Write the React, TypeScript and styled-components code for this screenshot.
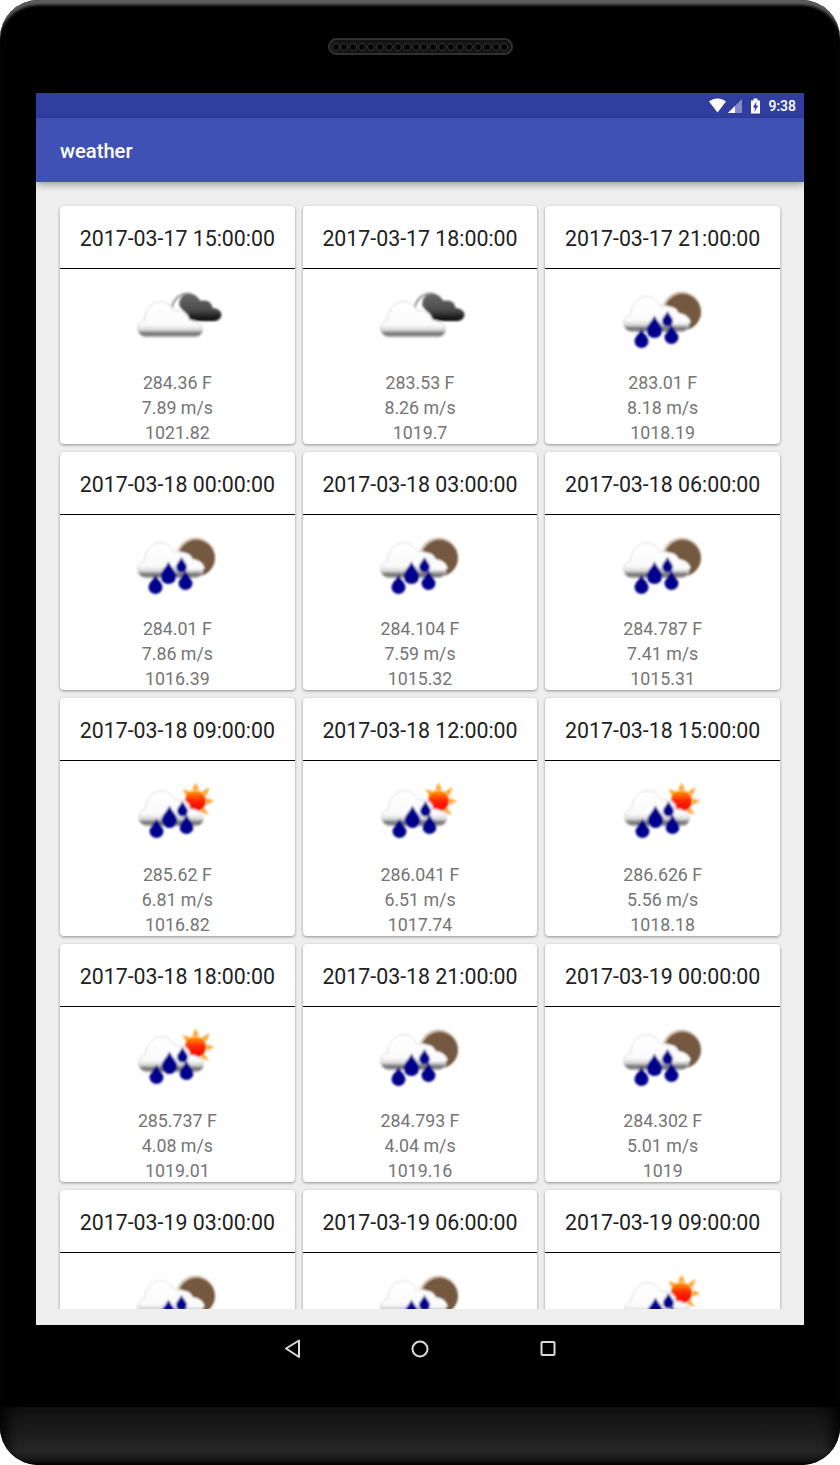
import { useId } from "react";
import styled, { createGlobalStyle } from "styled-components";

type Sky = "overcast" | "moon" | "sun";

interface Forecast {
  time: string;
  sky: Sky;
  lines: string[];
}

const forecasts: Forecast[] = [
  { time: "2017-03-17 15:00:00", sky: "overcast", lines: ["284.36 F", "7.89 m/s", "1021.82"] },
  { time: "2017-03-17 18:00:00", sky: "overcast", lines: ["283.53 F", "8.26 m/s", "1019.7"] },
  { time: "2017-03-17 21:00:00", sky: "moon", lines: ["283.01 F", "8.18 m/s", "1018.19"] },
  { time: "2017-03-18 00:00:00", sky: "moon", lines: ["284.01 F", "7.86 m/s", "1016.39"] },
  { time: "2017-03-18 03:00:00", sky: "moon", lines: ["284.104 F", "7.59 m/s", "1015.32"] },
  { time: "2017-03-18 06:00:00", sky: "moon", lines: ["284.787 F", "7.41 m/s", "1015.31"] },
  { time: "2017-03-18 09:00:00", sky: "sun", lines: ["285.62 F", "6.81 m/s", "1016.82"] },
  { time: "2017-03-18 12:00:00", sky: "sun", lines: ["286.041 F", "6.51 m/s", "1017.74"] },
  { time: "2017-03-18 15:00:00", sky: "sun", lines: ["286.626 F", "5.56 m/s", "1018.18"] },
  { time: "2017-03-18 18:00:00", sky: "sun", lines: ["285.737 F", "4.08 m/s", "1019.01"] },
  { time: "2017-03-18 21:00:00", sky: "moon", lines: ["284.793 F", "4.04 m/s", "1019.16"] },
  { time: "2017-03-19 00:00:00", sky: "moon", lines: ["284.302 F", "5.01 m/s", "1019"] },
  { time: "2017-03-19 03:00:00", sky: "moon", lines: [] },
  { time: "2017-03-19 06:00:00", sky: "moon", lines: [] },
  { time: "2017-03-19 09:00:00", sky: "sun", lines: [] },
];

const GlobalStyle = createGlobalStyle`
  html, body {
    margin: 0;
    padding: 0;
    background: #fff;
  }
  body {
    font-family: Roboto, "Liberation Sans", sans-serif;
  }
`;

const Phone = styled.div`
  width: 840px;
  height: 1465px;
  border-radius: 38px;
  overflow: hidden;
  display: flex;
  flex-direction: column;
  background: #000;
  box-shadow: inset 0 7px 3px -2px #5c5c5c;
`;

const TopBezel = styled.div`
  height: 93px;
  display: flex;
  justify-content: center;
  padding-top: 38px;
  box-sizing: border-box;
`;

const Speaker = styled.div`
  width: 185px;
  height: 17px;
  box-sizing: border-box;
  border: 2px solid #303030;
  border-radius: 9px;
  background: #141414;
  display: flex;
  align-items: center;
  justify-content: space-between;
  padding: 0 2px;
`;

const SpeakerHole = styled.span`
  width: 8px;
  height: 8px;
  box-sizing: border-box;
  border-radius: 50%;
  border: 1px solid #383838;
  background: #000;
`;

const Screen = styled.div`
  height: 1232px;
  margin: 0 36px;
  display: flex;
  flex-direction: column;
  background: #eeeeee;
`;

const StatusBar = styled.div`
  height: 25px;
  flex: none;
  background: #303f9f;
  display: flex;
  align-items: center;
  justify-content: flex-end;
  padding-right: 8px;
  color: #fff;
  font-size: 14px;
  font-weight: 500;
`;

const StatusIcons = styled.svg`
  margin-right: 6px;
`;

const AppBar = styled.div`
  height: 64px;
  flex: none;
  box-sizing: border-box;
  padding: 2px 0 0 24px;
  background: #3f51b5;
  display: flex;
  align-items: center;
  color: #fff;
  font-size: 20.2px;
  font-weight: 500;
  box-shadow: 0 3px 7px rgba(0, 0, 0, 0.32);
  z-index: 1;
`;

const Scroller = styled.div`
  flex: 1;
  min-height: 0;
  margin-bottom: 16px;
  overflow: hidden;
`;

const Grid = styled.div`
  display: grid;
  grid-template-columns: repeat(3, 1fr);
  gap: 8px;
  padding: 24px 24px 0;
`;

const Card = styled.div`
  height: 238px;
  background: #fff;
  border-radius: 4px;
  overflow: hidden;
  display: flex;
  flex-direction: column;
  align-items: stretch;
  box-shadow: 0 1px 3px rgba(0, 0, 0, 0.4);
`;

const CardTitle = styled.div`
  height: 60px;
  padding-top: 2px;
  flex: none;
  border-bottom: 1px solid #000;
  display: flex;
  align-items: center;
  justify-content: center;
  font-size: 21.33px;
  color: #212121;
`;

const IconSlot = styled.div`
  height: 101px;
  flex: none;
  display: flex;
  justify-content: center;
  padding-top: 11px;
  box-sizing: border-box;
`;

const Reading = styled.div`
  height: 25px;
  line-height: 25px;
  flex: none;
  text-align: center;
  font-size: 17.8px;
  color: #757575;
`;

const NavBar = styled.div`
  height: 82px;
  flex: none;
  display: flex;
  justify-content: center;
  align-items: flex-start;
  padding-top: 12px;
  box-sizing: border-box;
`;

const Chin = styled.div`
  flex: 1;
  background: linear-gradient(#101010 0%, #1c1c1c 45%, #272727 75%, #161616 92%, #000 100%);
  box-shadow:
    inset 18px 0 16px -12px #000,
    inset -18px 0 16px -12px #000;
`;

const cloudPath =
  "M27 57C17 57 14 43 25 40C25 25 43 12 55 31C64 29 70 35 69 40C78 40 84 46 83 51C82 55 79 57 75 57Z";

function Drops({ dx }: { dx: number }) {
  const drops: [number, number, number][] = [
    [44, 50, 8],
    [31, 61, 7],
    [61, 57, 7],
    [57, 41, 5.5],
  ];
  return (
    <g fill="#00008c">
      {drops.map(([x, y, r]) => (
        <path
          key={`${x}-${y}`}
          transform={`translate(${dx} 0)`}
          d={`M${x} ${y - r * 1.8}C${x + r * 0.4} ${y - r} ${x + r} ${y - r * 0.5} ${x + r} ${y}A${r} ${r} 0 1 1 ${x - r} ${y}C${x - r} ${y - r * 0.5} ${x - r * 0.4} ${y - r} ${x} ${y - r * 1.8}Z`}
        />
      ))}
    </g>
  );
}

function WeatherIcon({ sky }: { sky: Sky }) {
  const id = useId().replace(/[^a-zA-Z0-9]/g, "");
  const soft = `${id}soft`;
  const cloud = `${id}cloud`;
  const dark = `${id}dark`;
  const sunFill = `${id}sun`;
  // the icons do not sit the same way in their bitmaps, so the viewBox takes the offset
  const viewX = sky === "moon" ? -2.5 : 2.5;
  const viewY = sky === "sun" ? 2 : 0;

  return (
    <svg width={110} height={70} viewBox={`${viewX} ${viewY} 110 70`}>
      <defs>
        <filter id={soft} x="-10%" y="-10%" width="120%" height="120%">
          <feGaussianBlur stdDeviation={0.9} />
        </filter>
        <linearGradient id={cloud} x1="0" y1="0" x2="0" y2="1">
          <stop offset="0" stopColor="#ffffff" />
          <stop offset="0.66" stopColor="#fbfbfb" />
          <stop offset="0.8" stopColor="#d8d8d8" />
          <stop offset="0.9" stopColor="#707070" />
          <stop offset="1" stopColor="#9a9a9a" />
        </linearGradient>
        <linearGradient id={dark} x1="0" y1="0" x2="0" y2="1">
          <stop offset="0" stopColor="#6a6a6a" />
          <stop offset="0.62" stopColor="#4a4a4a" />
          <stop offset="1" stopColor="#000000" />
        </linearGradient>
        <linearGradient id={sunFill} x1="0" y1="0" x2="0" y2="1">
          <stop offset="0" stopColor="#ffa000" />
          <stop offset="0.45" stopColor="#ff2a00" />
          <stop offset="1" stopColor="#f00000" />
        </linearGradient>
      </defs>
      <g filter={`url(#${soft})`}>
        {sky === "overcast" && (
          <>
            <path
              d="M52 28C55 15 68 9 77 18"
              fill="none"
              stroke="#9a9a9a"
              strokeWidth={2.2}
            />
            <path
              d="M60 26C58 13 74 9 81 21C90 19 93 25 93 28C98 28 102 31 102 35C101 40 97 41 93 41L72 41Z"
              fill={`url(#${dark})`}
            />
            <path d={cloudPath} fill={`url(#${cloud})`} stroke="#cfcfcf" strokeWidth={0.9} />
          </>
        )}
        {sky === "moon" && (
          <>
            <circle cx={71} cy={31} r={19.5} fill="#d8c8b8" />
            <circle cx={72} cy={32} r={18.5} fill="#75593f" />
            <g transform="translate(-5 -5)">
              <path d={cloudPath} fill={`url(#${cloud})`} stroke="#d4d4d4" strokeWidth={0.9} />
            </g>
            <path d="M52 29C57 25 66 26 68 33C75 34 80 38 80 43L56 44Z" fill="#fbfbfb" />
            <Drops dx={0} />
          </>
        )}
        {sky === "sun" && (
          <>
            <g fill="#ffa52e">
              <path d="M72.5 20L76 12.5L79.5 20Z" />
              <path d="M63 19L72 22L67 27Z" />
              <path d="M82 22L90 17L87 26Z" />
              <path d="M87 28L94.5 31L87 35Z" />
              <path d="M84 37L89.5 45L81 42Z" />
            </g>
            <circle cx={76} cy={31} r={10.5} fill={`url(#${sunFill})`} />
            <g transform="translate(1 -1)">
              <path d={cloudPath} fill={`url(#${cloud})`} stroke="#d4d4d4" strokeWidth={0.9} />
            </g>
            <Drops dx={6} />
          </>
        )}
      </g>
    </svg>
  );
}

export default function App() {
  return (
    <Phone>
      <GlobalStyle />
      <TopBezel>
        <Speaker>
          {Array.from({ length: 20 }, (_, i) => (
            <SpeakerHole key={i} />
          ))}
        </Speaker>
      </TopBezel>
      <Screen>
        <StatusBar>
          <StatusIcons width={54} height={16} viewBox="0 0 54 16">
            <path d="M1 3.5C6 -0.5 13 -0.5 18 3.5L9.5 14.5Z" fill="#fff" />
            <path d="M34 1V15H20Z" fill="#fff" fillOpacity={0.4} />
            <path d="M27 8V15H20Z" fill="#fff" />
            <path d="M43 2.5H45.5V0.5H49.5V2.5H52V15.5H43Z" fill="#fff" />
            <path d="M48.5 3.5L44.8 9.5H47L46.5 14L50.2 7.5H48Z" fill="#303f9f" />
          </StatusIcons>
          9:38
        </StatusBar>
        <AppBar>weather</AppBar>
        <Scroller>
          <Grid>
            {forecasts.map((item) => (
              <Card key={item.time}>
                <CardTitle>{item.time}</CardTitle>
                <IconSlot>
                  <WeatherIcon sky={item.sky} />
                </IconSlot>
                {item.lines.map((line) => (
                  <Reading key={line}>{line}</Reading>
                ))}
              </Card>
            ))}
          </Grid>
        </Scroller>
      </Screen>
      <NavBar>
        <svg width={280} height={24} viewBox="0 0 280 24" fill="none" stroke="#dcdcdc" strokeWidth={2}>
          <path d="M6 11.5L19 3.5V20Z" strokeLinejoin="round" />
          <circle cx={140} cy={12} r={7.5} />
          <rect x={261.5} y={5} width={13} height={13} rx={1} />
        </svg>
      </NavBar>
      <Chin />
    </Phone>
  );
}
